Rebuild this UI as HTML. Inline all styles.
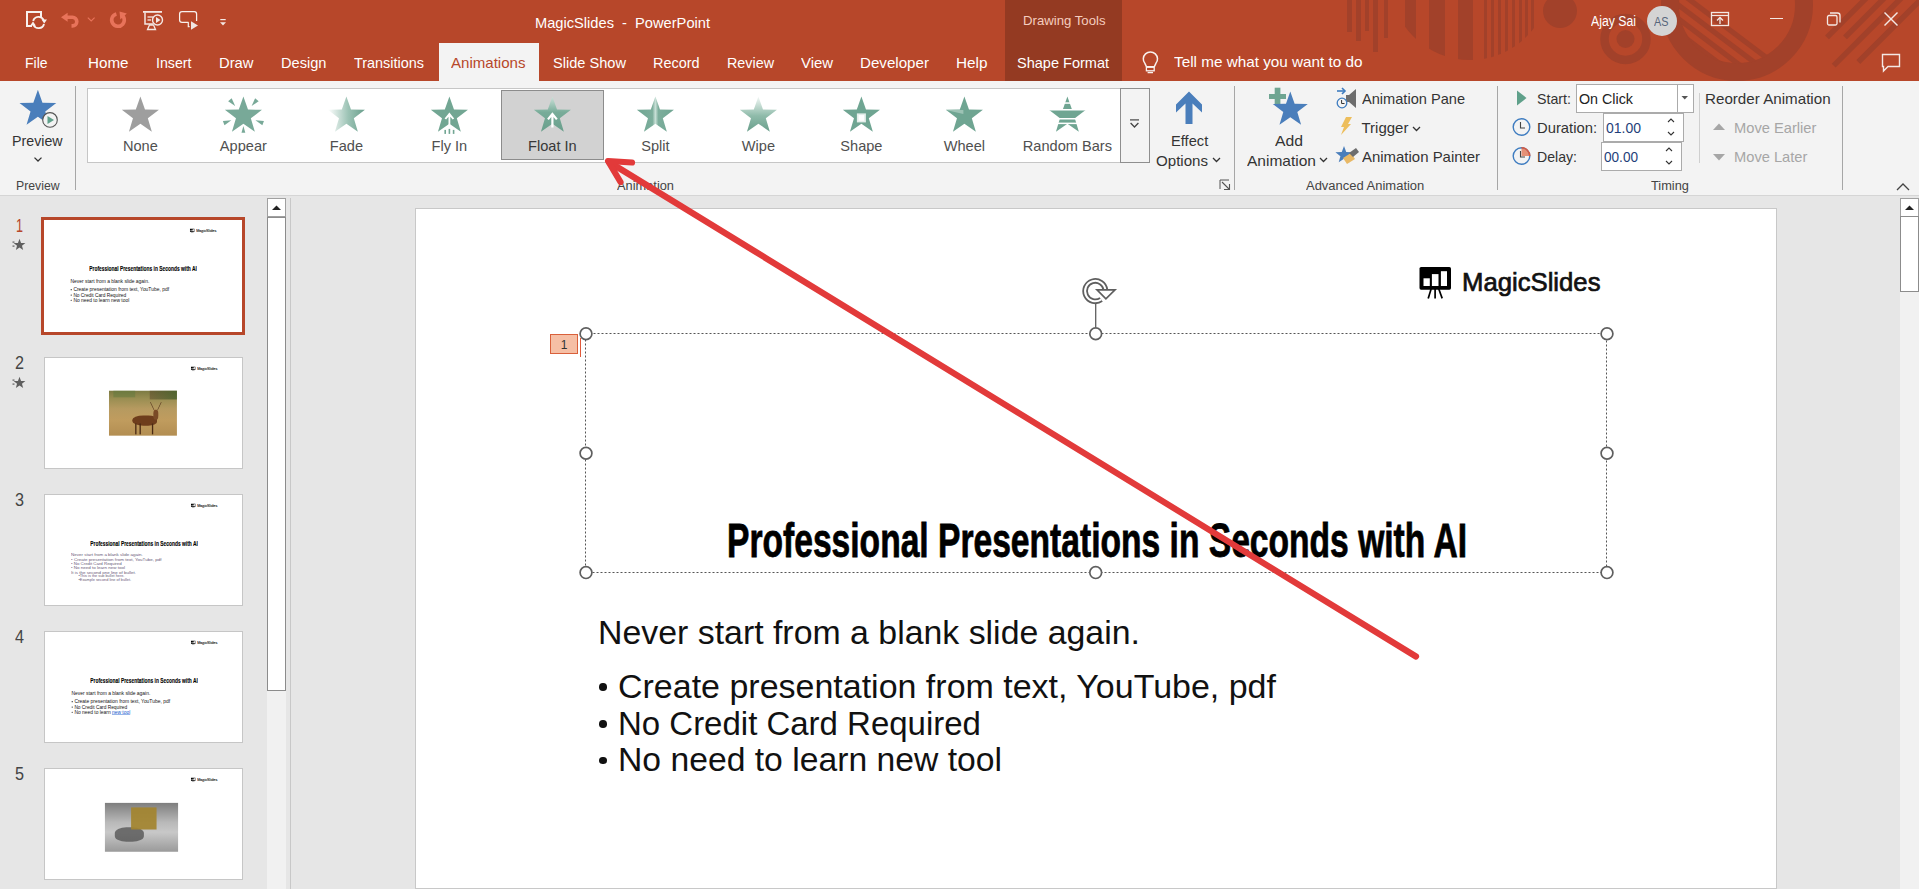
<!DOCTYPE html><html><head><meta charset="utf-8"><style>
html,body{margin:0;padding:0;}
body{width:1919px;height:889px;overflow:hidden;position:relative;background:#E6E6E6;font-family:"Liberation Sans",sans-serif;}
.t{position:absolute;line-height:1;white-space:nowrap;transform-origin:0 0;}
.r{position:absolute;}
</style></head><body>

<div class="r" style="left:0px;top:0px;width:1919px;height:81px;background:#B7472A;"></div>
<svg class="r" style="left:0px;top:0px;" width="1919" height="81" viewBox="0 0 1919 81"><rect x="1347" y="0" width="5" height="32" fill="#A2412A"/><rect x="1356" y="0" width="5" height="41" fill="#A2412A"/><rect x="1365" y="0" width="4" height="31" fill="#A2412A"/><rect x="1373" y="0" width="5" height="52" fill="#A2412A"/><rect x="1384" y="0" width="4" height="38" fill="#A2412A"/><clipPath id="hc"><circle cx="1470" cy="-20" r="80"/></clipPath><g clip-path="url(#hc)"><rect x="1405" y="-100" width="11" height="200" fill="#A2412A"/><rect x="1429" y="-100" width="16" height="200" fill="#A2412A"/><rect x="1458" y="-100" width="15" height="200" fill="#A2412A"/><rect x="1484" y="-100" width="3" height="200" fill="#A2412A"/><rect x="1491" y="-100" width="3" height="200" fill="#A2412A"/><rect x="1498" y="-100" width="3" height="200" fill="#A2412A"/><rect x="1505" y="-100" width="3" height="200" fill="#A2412A"/><rect x="1512" y="-100" width="3" height="200" fill="#A2412A"/><rect x="1519" y="-100" width="3" height="200" fill="#A2412A"/><rect x="1525" y="-100" width="3" height="200" fill="#A2412A"/><rect x="1531" y="-100" width="3" height="200" fill="#A2412A"/></g><circle cx="1560" cy="11" r="17" fill="#A2412A"/><circle cx="1625.5" cy="39" r="21" fill="none" stroke="#A2412A" stroke-width="8.5"/><circle cx="1625.5" cy="39" r="9" fill="#A2412A"/><circle cx="1737" cy="5" r="67" fill="none" stroke="#A2412A" stroke-width="18"/><clipPath id="rc"><circle cx="1737" cy="5" r="59"/></clipPath><g clip-path="url(#rc)"><line x1="-1783.9" y1="-2617.7" x2="3008.0" y2="993.2" stroke="#A2412A" stroke-width="5.2"/><line x1="-1790.5" y1="-2608.9" x2="3001.3" y2="1002.0" stroke="#A2412A" stroke-width="5.2"/><line x1="-1797.1" y1="-2600.1" x2="2994.7" y2="1010.8" stroke="#A2412A" stroke-width="5.2"/><line x1="-1803.7" y1="-2591.3" x2="2988.1" y2="1019.6" stroke="#A2412A" stroke-width="5.2"/></g><line x1="1827" y1="37.4" x2="1927" y2="-62.6" stroke="#A2412A" stroke-width="5.5"/><line x1="1845" y1="37.4" x2="1945" y2="-62.6" stroke="#A2412A" stroke-width="5.5"/><line x1="1833.7" y1="65.6" x2="1933.7" y2="-34.400000000000006" stroke="#A2412A" stroke-width="5.5"/><line x1="1858.3" y1="62" x2="1958.3" y2="-38" stroke="#A2412A" stroke-width="5.5"/></svg>
<div class="r" style="left:1005px;top:0px;width:117px;height:81px;background:#943A22;"></div>
<div class="t" style="left:1023.00px;top:14.00px;font-size:13px;color:#F5CDBF;transform:scaleX(1.0134);">Drawing Tools</div>
<div class="t" style="left:535.00px;top:15.00px;font-size:15px;color:#FFFFFF;transform:scaleX(0.9763);">MagicSlides&nbsp;&nbsp;-&nbsp;&nbsp;PowerPoint</div>
<div class="t" style="left:1591.00px;top:14.00px;font-size:14px;color:#FFFFFF;transform:scaleX(0.8762);">Ajay Sai</div>
<div class="r" style="left:1647px;top:6px;width:30px;height:30px;border-radius:50%;background:#D4D4D4;"></div>
<div class="t" style="left:1654.25px;top:16.00px;font-size:12.5px;color:#56657A;transform:scaleX(0.8695);">AS</div>
<svg class="r" style="left:24px;top:9px;" width="24" height="24" viewBox="0 0 24 24"><path d="M8,17 L3,17 L3,3 L17,3 L17,8" fill="none" stroke="#F8F1EE" stroke-width="2"/><path d="M9.19,12.05 A5.6,5.6 0 0 1 19.68,11.13" fill="none" stroke="#F8F1EE" stroke-width="1.9"/><polygon points="17.5,10.6 23,10.6 20.2,14.4" fill="#F8F1EE"/><path d="M20.01,14.95 A5.6,5.6 0 0 1 9.52,15.87" fill="none" stroke="#F8F1EE" stroke-width="1.9"/><polygon points="6.2,16.4 11.8,16.4 9,12.6" fill="#F8F1EE"/></svg>
<svg class="r" style="left:58px;top:9px;" width="42" height="24" viewBox="0 0 42 24"><polygon points="3,8.3 9.6,3.8 9.6,12.8" fill="#E8735A"/><path d="M9,8.3 L14.5,8.3 A4.3,4.3 0 0 1 14.5,16.9 L13.5,16.9" fill="none" stroke="#E8735A" stroke-width="3.6"/><polyline points="29.8,8.6 33.2,12 36.6,8.6" fill="none" stroke="#E8735A" stroke-width="1.1"/></svg>
<svg class="r" style="left:106px;top:9px;" width="24" height="24" viewBox="0 0 24 24"><path d="M14.66,5.29 A6.3,6.3 0 1 1 10.37,4.91" fill="none" stroke="#E8735A" stroke-width="3.6"/><polygon points="13.5,2.5 20.8,4.4 14.3,10.6" fill="#E8735A"/></svg>
<svg class="r" style="left:140px;top:9px;" width="26" height="24" viewBox="0 0 26 24"><rect x="3" y="2" width="19" height="1.8" fill="#F4E8E4"/><path d="M5,3.5 L5,15 L13,15" fill="none" stroke="#F4E8E4" stroke-width="1.5"/><line x1="7.5" y1="8" x2="13" y2="8" stroke="#F4E8E4" stroke-width="1.3"/><line x1="7.5" y1="11" x2="11" y2="11" stroke="#F4E8E4" stroke-width="1.3"/><circle cx="17.5" cy="11" r="5" fill="none" stroke="#F4E8E4" stroke-width="1.4"/><polygon points="16,8 16,14 20.5,11" fill="#F4E8E4"/><polygon points="9.5,16 13.5,16 15.5,20.5 7.5,20.5" fill="none" stroke="#F4E8E4" stroke-width="1.3"/></svg>
<svg class="r" style="left:176px;top:9px;" width="26" height="24" viewBox="0 0 26 24"><path d="M12.5,13.3 L6,13.3 Q3.6,13.3 3.6,11 L3.6,5 Q3.6,2.6 6,2.6 L18.3,2.6 Q20.6,2.6 20.6,5 L20.6,12" fill="none" stroke="#F8F1EE" stroke-width="1.25"/><polyline points="12.3,13.3 12.3,17.6 13.6,17.6" fill="none" stroke="#F8F1EE" stroke-width="1.2"/><polygon points="15,12.3 22,16.4 15,20.7" fill="#F0E6E2"/></svg>
<svg class="r" style="left:219px;top:16px;" width="10" height="12" viewBox="0 0 10 12"><rect x="1.3" y="3" width="5.4" height="1.2" fill="#F4E8E4"/><polygon points="1,6.2 7,6.2 4,9.4" fill="#F4E8E4"/></svg>
<svg class="r" style="left:1706px;top:9px;" width="28" height="22" viewBox="0 0 28 22"><rect x="5.5" y="3.5" width="17" height="13" fill="none" stroke="#F4E8E4" stroke-width="1.3"/><line x1="5.5" y1="6.5" x2="22.5" y2="6.5" stroke="#F4E8E4" stroke-width="1.2"/><line x1="14" y1="8.5" x2="14" y2="15" stroke="#F4E8E4" stroke-width="1.3"/><polyline points="11,11.5 14,8.5 17,11.5" fill="none" stroke="#F4E8E4" stroke-width="1.3"/></svg>
<div class="r" style="left:1770px;top:17.5px;width:13px;height:1.3px;background:#F4E8E4;"></div>
<svg class="r" style="left:1822px;top:8px;" width="22" height="22" viewBox="0 0 22 22"><rect x="5.5" y="7.5" width="9.5" height="9.5" rx="1.5" fill="none" stroke="#F4E8E4" stroke-width="1.3"/><path d="M8,5 L15.5,5 Q18,5 18,7.5 L18,14.5" fill="none" stroke="#F4E8E4" stroke-width="1.3"/></svg>
<svg class="r" style="left:1880px;top:8px;" width="22" height="22" viewBox="0 0 22 22"><line x1="4.5" y1="4.5" x2="17.5" y2="17.5" stroke="#F4E8E4" stroke-width="1.4"/><line x1="17.5" y1="4.5" x2="4.5" y2="17.5" stroke="#F4E8E4" stroke-width="1.4"/></svg>
<svg class="r" style="left:1878px;top:50px;" width="26" height="24" viewBox="0 0 26 24"><path d="M4.5,4.5 L21.5,4.5 L21.5,16.5 L10,16.5 L5.5,21 L5.5,16.5 L4.5,16.5 Z" fill="none" stroke="#F4E8E4" stroke-width="1.4" stroke-linejoin="miter"/></svg>
<svg class="r" style="left:1138px;top:49.3px;" width="26" height="28" viewBox="0 0 26 28"><path d="M8.5,17.8 L7,14.6 A7.1,7.1 0 1 1 17.8,14.6 L16.3,17.8 Z" fill="none" stroke="#F8F1EE" stroke-width="1.5" stroke-linejoin="round"/><rect x="8.4" y="18.2" width="7.8" height="3.6" fill="none" stroke="#F8F1EE" stroke-width="1.3"/><line x1="9.6" y1="23.6" x2="15" y2="23.6" stroke="#F8F1EE" stroke-width="1.3"/></svg>
<div class="r" style="left:439px;top:43px;width:100px;height:38px;background:#F3F3F3;"></div>
<div class="t" style="left:25.00px;top:55.00px;font-size:15px;color:#FFFFFF;transform:scaleX(0.9309);">File</div>
<div class="t" style="left:88.00px;top:55.00px;font-size:15px;color:#FFFFFF;transform:scaleX(1.0122);">Home</div>
<div class="t" style="left:156.00px;top:55.00px;font-size:15px;color:#FFFFFF;transform:scaleX(0.9463);">Insert</div>
<div class="t" style="left:219.00px;top:55.00px;font-size:15px;color:#FFFFFF;transform:scaleX(0.9856);">Draw</div>
<div class="t" style="left:281.00px;top:55.00px;font-size:15px;color:#FFFFFF;transform:scaleX(0.9744);">Design</div>
<div class="t" style="left:354.00px;top:55.00px;font-size:15px;color:#FFFFFF;transform:scaleX(0.9615);">Transitions</div>
<div class="t" style="left:451.00px;top:55.00px;font-size:15px;color:#B7472A;transform:scaleX(1.0040);">Animations</div>
<div class="t" style="left:553.00px;top:55.00px;font-size:15px;color:#FFFFFF;transform:scaleX(0.9727);">Slide Show</div>
<div class="t" style="left:653.00px;top:55.00px;font-size:15px;color:#FFFFFF;transform:scaleX(0.9616);">Record</div>
<div class="t" style="left:727.00px;top:55.00px;font-size:15px;color:#FFFFFF;transform:scaleX(0.9556);">Review</div>
<div class="t" style="left:801.00px;top:55.00px;font-size:15px;color:#FFFFFF;transform:scaleX(0.9925);">View</div>
<div class="t" style="left:860.00px;top:55.00px;font-size:15px;color:#FFFFFF;transform:scaleX(1.0092);">Developer</div>
<div class="t" style="left:956.40px;top:55.00px;font-size:15px;color:#FFFFFF;transform:scaleX(1.0210);">Help</div>
<div class="t" style="left:1017.00px;top:55.00px;font-size:15px;color:#FFFFFF;transform:scaleX(0.9679);">Shape Format</div>
<div class="t" style="left:1174.00px;top:54.00px;font-size:15px;color:#FFFFFF;transform:scaleX(1.0184);">Tell me what you want to do</div>
<div class="r" style="left:0px;top:81px;width:1919px;height:114px;background:#F3F3F3;"></div>
<div class="r" style="left:0px;top:195px;width:1919px;height:1px;background:#D5D5D5;"></div>
<svg class="r" style="left:0px;top:82px;" width="80" height="50" viewBox="0 0 80 50"><polygon points="37.90,7.65 42.45,20.74 56.30,21.02 45.26,29.39 49.27,42.65 37.90,34.74 26.53,42.65 30.54,29.39 19.50,21.02 33.35,20.74" fill="#4A7EBB"/><circle cx="50" cy="37.9" r="7.3" fill="#F3F3F3" stroke="#555" stroke-width="1.1"/><polygon points="47.5,34 47.5,42 54,38" fill="#5FA08A"/></svg>
<div class="t" style="left:12.30px;top:133.00px;font-size:15px;color:#333;transform:scaleX(0.9484);">Preview</div>
<svg class="r" style="left:31.5px;top:154px;" width="12" height="10" viewBox="0 0 12 10"><polyline points="2.5,3.6 6,7 9.5,3.6" fill="none" stroke="#333" stroke-width="1.3"/></svg>
<div class="t" style="left:15.50px;top:180.00px;font-size:12.5px;color:#444444;transform:scaleX(0.9807);">Preview</div>
<div class="r" style="left:75px;top:86px;width:1px;height:104px;background:#A6A6A6;"></div>
<div class="r" style="left:87px;top:88px;width:1034px;height:75px;background:#FFFFFF;box-sizing:border-box;border:1px solid #C6C6C6;"></div>
<div class="r" style="left:501px;top:90px;width:103px;height:70px;background:#D2D2D2;box-sizing:border-box;border:1px solid #8C8C8C;"></div>
<div class="r" style="left:1120px;top:88px;width:30px;height:75px;background:#F3F3F3;box-sizing:border-box;border:1px solid #8E8E8E;"></div>
<svg class="r" style="left:1127px;top:116px;" width="16" height="16" viewBox="0 0 16 16"><line x1="3" y1="3.9" x2="12" y2="3.9" stroke="#444" stroke-width="1.2"/><polyline points="3.6,7 7.5,11 11.4,7" fill="none" stroke="#444" stroke-width="1.3"/></svg>
<svg class="r" style="left:87px;top:88px;" width="1034" height="75" viewBox="0 0 1034 75"><defs>
<linearGradient id="gfade" x1="0" y1="0" x2="1" y2="0"><stop offset="0" stop-color="#FFFFFF"/><stop offset="0.55" stop-color="#9CC3B5"/><stop offset="1" stop-color="#6A9F8C"/></linearGradient>
<linearGradient id="gtop" x1="0" y1="0" x2="0" y2="1"><stop offset="0" stop-color="#F4F9F7"/><stop offset="0.55" stop-color="#8FBBAA"/><stop offset="1" stop-color="#6A9F8C"/></linearGradient>
<linearGradient id="gsplit" x1="0" y1="0" x2="1" y2="0"><stop offset="0" stop-color="#6FA592"/><stop offset="0.42" stop-color="#7DAE9C"/><stop offset="0.5" stop-color="#C9E0D7"/><stop offset="0.58" stop-color="#7DAE9C"/><stop offset="1" stop-color="#6FA592"/></linearGradient>
<linearGradient id="gfl" x1="0" y1="0" x2="0" y2="1"><stop offset="0" stop-color="#CFE3DB"/><stop offset="0.45" stop-color="#78AC99"/><stop offset="1" stop-color="#6A9F8C"/></linearGradient>
</defs><polygon points="53.40,8.40 57.98,21.59 71.95,21.87 60.82,30.31 64.86,43.68 53.40,35.70 41.94,43.68 45.98,30.31 34.85,21.87 48.82,21.59" fill="#9E9E9E"/><polygon points="156.40,8.40 160.98,21.59 174.95,21.87 163.82,30.31 167.86,43.68 156.40,35.70 144.94,43.68 148.98,30.31 137.85,21.87 151.82,21.59" fill="#78A998"/><polygon points="148.17,18.09 144.66,10.33 141.14,13.29" fill="#78A998"/><polygon points="164.63,18.09 171.66,13.29 168.14,10.33" fill="#78A998"/><polygon points="144.37,32.28 135.88,32.92 137.45,37.24" fill="#78A998"/><polygon points="168.43,32.28 175.35,37.24 176.92,32.92" fill="#78A998"/><polygon points="156.40,38.10 154.50,44.70 158.30,44.70" fill="#78A998"/><polygon points="259.40,8.40 263.98,21.59 277.95,21.87 266.82,30.31 270.86,43.68 259.40,35.70 247.94,43.68 251.98,30.31 240.85,21.87 254.82,21.59" fill="url(#gfade)"/><polygon points="362.40,8.40 366.98,21.59 380.95,21.87 369.82,30.31 373.86,43.68 362.40,35.70 350.94,43.68 354.98,30.31 343.85,21.87 357.82,21.59" fill="#72A693"/><polygon points="357.59999999999997,30.400000000000006 362.4,24.500000000000007 367.2,30.400000000000006 365.7,31.500000000000007 363.29999999999995,28.800000000000004 363.29999999999995,40.900000000000006 361.5,40.900000000000006 361.5,28.800000000000004 359.09999999999997,31.500000000000007" fill="#fff"/><rect x="357.4" y="41.900000000000006" width="1.6" height="4" fill="#72A693"/><rect x="361.59999999999997" y="40.900000000000006" width="1.6" height="5" fill="#72A693"/><rect x="365.79999999999995" y="41.900000000000006" width="1.6" height="4" fill="#72A693"/><polygon points="465.40,8.40 469.98,21.59 483.95,21.87 472.82,30.31 476.86,43.68 465.40,35.70 453.94,43.68 457.98,30.31 446.85,21.87 460.82,21.59" fill="url(#gfl)"/><polygon points="460.09999999999997,30.700000000000006 465.4,24.300000000000004 470.7,30.700000000000006 469.0,31.900000000000006 466.5,28.900000000000006 466.5,39.400000000000006 464.29999999999995,39.400000000000006 464.29999999999995,28.900000000000006 461.79999999999995,31.900000000000006" fill="#fff"/><polygon points="568.40,8.40 572.98,21.59 586.95,21.87 575.82,30.31 579.86,43.68 568.40,35.70 556.94,43.68 560.98,30.31 549.85,21.87 563.82,21.59" fill="url(#gsplit)"/><polygon points="671.40,8.40 675.98,21.59 689.95,21.87 678.82,30.31 682.86,43.68 671.40,35.70 659.94,43.68 663.98,30.31 652.85,21.87 666.82,21.59" fill="url(#gtop)"/><polygon points="774.40,8.40 778.98,21.59 792.95,21.87 781.82,30.31 785.86,43.68 774.40,35.70 762.94,43.68 766.98,30.31 755.85,21.87 769.82,21.59" fill="#6FA592"/><rect x="769.9" y="25.400000000000006" width="9" height="9" fill="#E5EFEB"/><rect x="771.6" y="27.100000000000005" width="5.6" height="5.6" fill="#FFFFFF"/><polygon points="877.40,8.40 881.98,21.59 895.95,21.87 884.82,30.31 888.86,43.68 877.40,35.70 865.94,43.68 869.98,30.31 858.85,21.87 872.82,21.59" fill="#6FA592"/><polygon points="858.9,21.900000000000006 876.4,21.900000000000006 876.4,25.900000000000006" fill="#A9CBBE" opacity="0.8"/><polygon points="980.40,8.40 984.98,21.59 998.95,21.87 987.82,30.31 991.86,43.68 980.40,35.70 968.94,43.68 972.98,30.31 961.85,21.87 975.82,21.59" fill="#6FA592"/><rect x="958.4000000000001" y="14.300000000000006" width="44" height="1.5" fill="#FFFFFF"/><rect x="958.4000000000001" y="21.000000000000007" width="44" height="1.5" fill="#FFFFFF"/><rect x="958.4000000000001" y="30.000000000000007" width="44" height="1.5" fill="#FFFFFF"/><rect x="958.4000000000001" y="34.60000000000001" width="44" height="1.5" fill="#FFFFFF"/></svg>
<div class="t" style="left:122.95px;top:139.00px;font-size:14.6px;color:#505050;">None</div>
<div class="t" style="left:219.86px;top:139.00px;font-size:14.6px;color:#505050;">Appear</div>
<div class="t" style="left:329.76px;top:139.00px;font-size:14.6px;color:#505050;">Fade</div>
<div class="t" style="left:431.55px;top:139.00px;font-size:14.6px;color:#505050;">Fly In</div>
<div class="t" style="left:528.05px;top:139.00px;font-size:14.6px;color:#383838;">Float In</div>
<div class="t" style="left:641.20px;top:139.00px;font-size:14.6px;color:#505050;">Split</div>
<div class="t" style="left:741.77px;top:139.00px;font-size:14.6px;color:#505050;">Wipe</div>
<div class="t" style="left:840.29px;top:139.00px;font-size:14.6px;color:#505050;">Shape</div>
<div class="t" style="left:943.71px;top:139.00px;font-size:14.6px;color:#505050;">Wheel</div>
<div class="t" style="left:1022.77px;top:139.00px;font-size:14.6px;color:#505050;">Random Bars</div>
<div class="t" style="left:616.50px;top:180.00px;font-size:12.5px;color:#444444;transform:scaleX(1.0254);">Animation</div>
<svg class="r" style="left:1170px;top:88px;" width="40" height="40" viewBox="0 0 40 40"><polygon points="19,3.5 32,16.5 32,24.5 22.5,15.5 22.5,36 15.5,36 15.5,15.5 6,24.5 6,16.5" fill="#4A7EBB"/></svg>
<div class="t" style="left:1170.80px;top:133.00px;font-size:15px;color:#333;transform:scaleX(0.9769);">Effect</div>
<div class="t" style="left:1156.00px;top:153.00px;font-size:15px;color:#333;transform:scaleX(1.0059);">Options</div>
<svg class="r" style="left:1211px;top:156px;" width="12" height="8" viewBox="0 0 12 8"><polyline points="2,2 5.5,5.5 9,2" fill="none" stroke="#333" stroke-width="1.3"/></svg>
<svg class="r" style="left:1218px;top:178px;" width="14" height="14" viewBox="0 0 14 14"><polyline points="2,11 2,2 11,2" fill="none" stroke="#555" stroke-width="1"/><line x1="4" y1="4" x2="11" y2="11" stroke="#555" stroke-width="1.1"/><polyline points="6,11.5 11.5,11.5 11.5,6" fill="none" stroke="#555" stroke-width="1.1"/></svg>
<div class="r" style="left:1234px;top:86px;width:1px;height:104px;background:#A6A6A6;"></div>
<svg class="r" style="left:1265px;top:86px;" width="50" height="42" viewBox="0 0 50 42"><rect x="4" y="8" width="17" height="5" fill="#6FA592"/><rect x="9.7" y="1.7" width="5.7" height="17.2" fill="#6FA592"/><polygon points="25.30,5.40 29.63,17.85 42.80,18.11 32.30,26.07 36.12,38.69 25.30,31.16 14.48,38.69 18.30,26.07 7.80,18.11 20.97,17.85" fill="#4A7EBB"/></svg>
<div class="t" style="left:1275.00px;top:133.00px;font-size:15px;color:#333;transform:scaleX(1.0491);">Add</div>
<div class="t" style="left:1247.00px;top:153.00px;font-size:15px;color:#333;transform:scaleX(1.0344);">Animation</div>
<svg class="r" style="left:1318px;top:156px;" width="12" height="8" viewBox="0 0 12 8"><polyline points="2,2 5.5,5.5 9,2" fill="none" stroke="#333" stroke-width="1.3"/></svg>
<svg class="r" style="left:1335px;top:86px;" width="24" height="24" viewBox="0 0 24 24"><polygon points="11,9 14,9 21,3 21,22 14,16 11,16" fill="#6D6D6D"/><line x1="2" y1="5" x2="10" y2="5" stroke="#3E7CC0" stroke-width="1.6"/><polyline points="7,2 10,5 7,8" fill="none" stroke="#3E7CC0" stroke-width="1.6"/><circle cx="7" cy="17" r="4.8" fill="#F3F3F3" stroke="#3E7CC0" stroke-width="1.3"/><polyline points="6.6,14 6.6,17.5 9.5,17.5" fill="none" stroke="#333" stroke-width="1"/></svg>
<div class="t" style="left:1361.50px;top:91.00px;font-size:15px;color:#333;transform:scaleX(0.9726);">Animation Pane</div>
<svg class="r" style="left:1338px;top:116px;" width="18" height="22" viewBox="0 0 18 22"><polygon points="8,1 14,1 10,8 13,8 3,19 6,11 3,11" fill="#EDBE5C"/></svg>
<div class="t" style="left:1361.50px;top:120.00px;font-size:15px;color:#333;">Trigger</div>
<svg class="r" style="left:1411px;top:125px;" width="12" height="8" viewBox="0 0 12 8"><polyline points="2,2 5.5,5.5 9,2" fill="none" stroke="#333" stroke-width="1.3"/></svg>
<svg class="r" style="left:1335px;top:145px;" width="26" height="22" viewBox="0 0 26 22"><polygon points="9.00,1.00 11.22,6.94 17.56,7.22 12.59,11.17 14.29,17.28 9.00,13.78 3.71,17.28 5.41,11.17 0.44,7.22 6.78,6.94" fill="#4A7EBB"/><polygon points="8,13 16,8 20,14 12,19" fill="#E8B865"/><polygon points="14,8 21,3 24,7 18,12" fill="#6D6D6D"/></svg>
<div class="t" style="left:1361.50px;top:149.00px;font-size:15px;color:#333;transform:scaleX(0.9966);">Animation Painter</div>
<div class="t" style="left:1306.35px;top:180.00px;font-size:12.5px;color:#444444;transform:scaleX(1.0380);">Advanced Animation</div>
<div class="r" style="left:1497px;top:86px;width:1px;height:104px;background:#A6A6A6;"></div>
<svg class="r" style="left:1514px;top:88px;" width="16" height="20" viewBox="0 0 16 20"><polygon points="3,2.5 12.5,10 3,17.5" fill="#5FA08A"/></svg>
<div class="t" style="left:1536.60px;top:91.00px;font-size:15px;color:#333;transform:scaleX(0.9485);">Start:</div>
<div class="r" style="left:1576px;top:84px;width:118px;height:29px;background:#FFFFFF;box-sizing:border-box;border:1px solid #ABABAB;"></div>
<div class="r" style="left:1677px;top:85px;width:1px;height:27px;background:#ABABAB;"></div>
<svg class="r" style="left:1680px;top:94px;" width="10" height="8" viewBox="0 0 10 8"><polygon points="1.5,2 8,2 4.75,5.5" fill="#555"/></svg>
<div class="t" style="left:1579.00px;top:91.00px;font-size:15px;color:#222;transform:scaleX(0.9528);">On Click</div>
<svg class="r" style="left:1511px;top:116px;" width="22" height="22" viewBox="0 0 22 22"><circle cx="10.5" cy="11" r="8.3" fill="none" stroke="#3E7CC0" stroke-width="1.4"/><polyline points="9.5,6 9.5,12 14,12" fill="none" stroke="#444" stroke-width="1.1"/></svg>
<div class="t" style="left:1537.00px;top:120.00px;font-size:15px;color:#333;transform:scaleX(0.9858);">Duration:</div>
<div class="r" style="left:1603px;top:113px;width:81px;height:29px;background:#FFFFFF;box-sizing:border-box;border:1px solid #ABABAB;"></div>
<div class="t" style="left:1606.00px;top:120.00px;font-size:15px;color:#1F3F7A;transform:scaleX(0.9324);">01.00</div>
<svg class="r" style="left:1664px;top:116px;" width="14" height="22" viewBox="0 0 14 22"><polyline points="4,6 7,3 10,6" fill="none" stroke="#333" stroke-width="1.1"/><polyline points="4,16 7,19 10,16" fill="none" stroke="#333" stroke-width="1.1"/></svg>
<svg class="r" style="left:1511px;top:145px;" width="22" height="22" viewBox="0 0 22 22"><path d="M10.5,11 L10.5,2.7 A8.3,8.3 0 0 1 18.8,11 Z" fill="#E59076"/><circle cx="10.5" cy="11" r="8.3" fill="none" stroke="#3E7CC0" stroke-width="1.4"/><path d="M10.5,2.7 A8.3,8.3 0 0 1 18.8,11" fill="none" stroke="#E0583A" stroke-width="1.4"/><polyline points="9.5,6 9.5,12 14,12" fill="none" stroke="#444" stroke-width="1.1"/></svg>
<div class="t" style="left:1537.00px;top:149.00px;font-size:15px;color:#333;transform:scaleX(0.9408);">Delay:</div>
<div class="r" style="left:1601px;top:142px;width:81px;height:29px;background:#FFFFFF;box-sizing:border-box;border:1px solid #ABABAB;"></div>
<div class="t" style="left:1604.00px;top:149.00px;font-size:15px;color:#1F3F7A;transform:scaleX(0.9058);">00.00</div>
<svg class="r" style="left:1662px;top:145px;" width="14" height="22" viewBox="0 0 14 22"><polyline points="4,6 7,3 10,6" fill="none" stroke="#333" stroke-width="1.1"/><polyline points="4,16 7,19 10,16" fill="none" stroke="#333" stroke-width="1.1"/></svg>
<div class="t" style="left:1650.55px;top:180.00px;font-size:12.5px;color:#444444;transform:scaleX(1.0231);">Timing</div>
<div class="r" style="left:1699px;top:93px;width:1px;height:70px;background:#CFCFCF;"></div>
<div class="t" style="left:1705.20px;top:91.00px;font-size:15px;color:#333;transform:scaleX(1.0110);">Reorder Animation</div>
<svg class="r" style="left:1711px;top:122px;" width="16" height="10" viewBox="0 0 16 10"><polygon points="2,8 8,1.5 14,8" fill="#A6A6A6"/></svg>
<div class="t" style="left:1733.60px;top:120.00px;font-size:15px;color:#A6A6A6;transform:scaleX(0.9787);">Move Earlier</div>
<svg class="r" style="left:1711px;top:152px;" width="16" height="10" viewBox="0 0 16 10"><polygon points="2,2 14,2 8,8.5" fill="#A6A6A6"/></svg>
<div class="t" style="left:1733.60px;top:149.00px;font-size:15px;color:#A6A6A6;transform:scaleX(0.9782);">Move Later</div>
<div class="r" style="left:1842px;top:86px;width:1px;height:104px;background:#A6A6A6;"></div>
<svg class="r" style="left:1895px;top:181px;" width="16" height="12" viewBox="0 0 16 12"><polyline points="2,9 8,3 14,9" fill="none" stroke="#444" stroke-width="1.3"/></svg>
<div class="r" style="left:290px;top:198px;width:1px;height:691px;background:#C8C8C8;"></div>
<div class="r" style="left:267px;top:198px;width:19px;height:691px;background:#F1F1F1;"></div>
<div class="r" style="left:267px;top:198px;width:19px;height:19px;background:#FFFFFF;box-sizing:border-box;border:1px solid #A0A0A0;"></div>
<svg class="r" style="left:267px;top:198px;" width="19" height="19" viewBox="0 0 19 19"><polygon points="5,12 14,12 9.5,7.5" fill="#222"/></svg>
<div class="r" style="left:267px;top:217px;width:19px;height:474px;background:#FFFFFF;box-sizing:border-box;border:1.5px solid #8C8C8C;"></div>
<div class="r" style="left:1900px;top:198px;width:19px;height:691px;background:#F1F1F1;"></div>
<div class="r" style="left:1900px;top:198px;width:19px;height:19px;background:#FFFFFF;box-sizing:border-box;border:1px solid #A0A0A0;"></div>
<svg class="r" style="left:1900px;top:198px;" width="19" height="19" viewBox="0 0 19 19"><polygon points="5,12 14,12 9.5,7.5" fill="#222"/></svg>
<div class="r" style="left:1900px;top:216px;width:19px;height:76px;background:#FFFFFF;box-sizing:border-box;border:1.5px solid #8C8C8C;"></div>
<div class="r" style="left:415px;top:208px;width:1362px;height:681px;background:#FFFFFF;box-sizing:border-box;border:1px solid #C8C8C8;"></div>
<div class="r" style="left:416px;top:209px;width:1360px;height:680px;overflow:hidden">
<div class="r" style="left:0;top:-1px;width:1360px;height:766px">
<svg class="r" style="left:1002px;top:58px" width="34" height="34" viewBox="0 0 34 34"><rect x="1.5" y="1" width="31.5" height="22.7" rx="1.6" fill="#000"/><rect x="5.5" y="12.3" width="6.3" height="7.7" fill="#fff"/><rect x="13.9" y="8.1" width="6.6" height="11.9" fill="#fff"/><rect x="22.9" y="5.2" width="6.1" height="14.8" fill="#fff"/><line x1="13.1" y1="23" x2="10.2" y2="32.4" stroke="#000" stroke-width="1.7"/><line x1="17.1" y1="23" x2="17.1" y2="32.4" stroke="#000" stroke-width="1.7"/><line x1="20.8" y1="23" x2="24.2" y2="32.4" stroke="#000" stroke-width="1.7"/></svg>
<div class="t" style="left:1045.50px;top:61.00px;font-size:26px;color:#111111;transform:scaleX(0.9881);-webkit-text-stroke:0.7px #111;">MagicSlides</div>
<div class="t" style="left:310.50px;top:309.00px;font-size:47.5px;color:#000000;font-weight:700;transform:scaleX(0.7074);-webkit-text-stroke:0.8px #000;">Professional Presentations in Seconds with AI</div>
<div class="t" style="left:182.20px;top:409.00px;font-size:32.8px;color:#111111;transform:scaleX(1.0323);">Never start from a blank slide again.</div>
<div class="r" style="left:183px;top:475.1px;width:7.6px;height:7.6px;border-radius:50%;background:#111"></div>
<div class="r" style="left:183px;top:512.2px;width:7.6px;height:7.6px;border-radius:50%;background:#111"></div>
<div class="r" style="left:183px;top:548.6px;width:7.6px;height:7.6px;border-radius:50%;background:#111"></div>
<div class="t" style="left:202.00px;top:463.00px;font-size:32.8px;color:#111111;transform:scaleX(1.0360);">Create presentation from text, YouTube, pdf</div>
<div class="t" style="left:202.00px;top:500.00px;font-size:32.8px;color:#111111;transform:scaleX(1.0056);">No Credit Card Required</div>
<div class="t" style="left:202.00px;top:536.00px;font-size:32.8px;color:#111111;transform:scaleX(1.0273);">No need to learn new tool</div>
</div></div>
<div class="r" style="left:41px;top:217px;width:204px;height:118px;background:#B7472A;"></div>
<div class="r" style="left:44.2px;top:220.2px;width:197.8px;height:111.5px;background:#fff;overflow:hidden">
<div class="r" style="left:0;top:0;width:1360px;height:766px;transform:scale(0.14544);transform-origin:0 0">
<svg class="r" style="left:1002px;top:58px" width="34" height="34" viewBox="0 0 34 34"><rect x="1.5" y="1" width="31.5" height="22.7" rx="1.6" fill="#000"/><rect x="5.5" y="12.3" width="6.3" height="7.7" fill="#fff"/><rect x="13.9" y="8.1" width="6.6" height="11.9" fill="#fff"/><rect x="22.9" y="5.2" width="6.1" height="14.8" fill="#fff"/><line x1="13.1" y1="23" x2="10.2" y2="32.4" stroke="#000" stroke-width="1.7"/><line x1="17.1" y1="23" x2="17.1" y2="32.4" stroke="#000" stroke-width="1.7"/><line x1="20.8" y1="23" x2="24.2" y2="32.4" stroke="#000" stroke-width="1.7"/></svg>
<div class="t" style="left:1045.50px;top:61.00px;font-size:26px;color:#111111;transform:scaleX(0.9881);-webkit-text-stroke:0.7px #111;">MagicSlides</div>
<div class="t" style="left:310.50px;top:309.00px;font-size:47.5px;color:#000000;font-weight:700;transform:scaleX(0.7074);-webkit-text-stroke:0.8px #000;">Professional Presentations in Seconds with AI</div>
<div class="t" style="left:182.20px;top:409.00px;font-size:32.8px;color:#111111;transform:scaleX(1.0323);">Never start from a blank slide again.</div>
<div class="r" style="left:183px;top:475.1px;width:7.6px;height:7.6px;border-radius:50%;background:#111"></div>
<div class="r" style="left:183px;top:512.2px;width:7.6px;height:7.6px;border-radius:50%;background:#111"></div>
<div class="r" style="left:183px;top:548.6px;width:7.6px;height:7.6px;border-radius:50%;background:#111"></div>
<div class="t" style="left:202.00px;top:463.00px;font-size:32.8px;color:#111111;transform:scaleX(1.0360);">Create presentation from text, YouTube, pdf</div>
<div class="t" style="left:202.00px;top:500.00px;font-size:32.8px;color:#111111;transform:scaleX(1.0056);">No Credit Card Required</div>
<div class="t" style="left:202.00px;top:536.00px;font-size:32.8px;color:#111111;transform:scaleX(1.0273);">No need to learn new tool</div>
</div></div>
<div class="r" style="left:44px;top:357px;width:198.5px;height:112px;background:#C6C6C6;"></div>
<div class="r" style="left:45px;top:358px;width:196.5px;height:110px;background:#fff;overflow:hidden">
<div class="r" style="left:0;top:0;width:1360px;height:766px;transform:scale(0.14544);transform-origin:0 0">
<svg class="r" style="left:1002px;top:58px" width="34" height="34" viewBox="0 0 34 34"><rect x="1.5" y="1" width="31.5" height="22.7" rx="1.6" fill="#000"/><rect x="5.5" y="12.3" width="6.3" height="7.7" fill="#fff"/><rect x="13.9" y="8.1" width="6.6" height="11.9" fill="#fff"/><rect x="22.9" y="5.2" width="6.1" height="14.8" fill="#fff"/><line x1="13.1" y1="23" x2="10.2" y2="32.4" stroke="#000" stroke-width="1.7"/><line x1="17.1" y1="23" x2="17.1" y2="32.4" stroke="#000" stroke-width="1.7"/><line x1="20.8" y1="23" x2="24.2" y2="32.4" stroke="#000" stroke-width="1.7"/></svg>
<div class="t" style="left:1045.50px;top:61.00px;font-size:26px;color:#111111;transform:scaleX(0.9881);-webkit-text-stroke:0.7px #111;">MagicSlides</div>
<div class="r" style="left:440px;top:225px;width:467px;height:309px;background:linear-gradient(180deg,#7C7A42 0%,#9A8E52 18%,#B69A60 40%,#C09C5E 65%,#B38E52 100%)"></div>
<div class="r" style="left:720px;top:225px;width:187px;height:60px;background:linear-gradient(90deg,rgba(90,70,40,0.5),rgba(60,90,40,0.7))"></div>
<div class="r" style="left:470px;top:225px;width:150px;height:45px;background:rgba(90,120,60,0.45)"></div>
<div class="r" style="left:600px;top:395px;width:170px;height:70px;border-radius:45% 35% 35% 45%;background:#6E3D1C"></div>
<div class="r" style="left:745px;top:355px;width:34px;height:70px;border-radius:40%;background:#7A4A26"></div>
<div class="r" style="left:620px;top:450px;width:9px;height:75px;background:#4A2A14"></div><div class="r" style="left:650px;top:450px;width:9px;height:75px;background:#4A2A14"></div><div class="r" style="left:735px;top:450px;width:9px;height:75px;background:#4A2A14"></div>
<div class="r" style="left:735px;top:300px;width:4px;height:60px;background:#5A3A20;transform:rotate(-25deg)"></div><div class="r" style="left:785px;top:300px;width:4px;height:60px;background:#5A3A20;transform:rotate(25deg)"></div>
</div></div>
<div class="r" style="left:44px;top:494px;width:198.5px;height:112px;background:#C6C6C6;"></div>
<div class="r" style="left:45px;top:495px;width:196.5px;height:110px;background:#fff;overflow:hidden">
<div class="r" style="left:0;top:0;width:1360px;height:766px;transform:scale(0.14544);transform-origin:0 0">
<svg class="r" style="left:1002px;top:58px" width="34" height="34" viewBox="0 0 34 34"><rect x="1.5" y="1" width="31.5" height="22.7" rx="1.6" fill="#000"/><rect x="5.5" y="12.3" width="6.3" height="7.7" fill="#fff"/><rect x="13.9" y="8.1" width="6.6" height="11.9" fill="#fff"/><rect x="22.9" y="5.2" width="6.1" height="14.8" fill="#fff"/><line x1="13.1" y1="23" x2="10.2" y2="32.4" stroke="#000" stroke-width="1.7"/><line x1="17.1" y1="23" x2="17.1" y2="32.4" stroke="#000" stroke-width="1.7"/><line x1="20.8" y1="23" x2="24.2" y2="32.4" stroke="#000" stroke-width="1.7"/></svg>
<div class="t" style="left:1045.50px;top:61.00px;font-size:26px;color:#111111;transform:scaleX(0.9881);-webkit-text-stroke:0.7px #111;">MagicSlides</div>
<div class="t" style="left:310.50px;top:309.00px;font-size:47.5px;color:#000000;font-weight:700;transform:scaleX(0.7074);-webkit-text-stroke:0.8px #000;">Professional Presentations in Seconds with AI</div>
<div class="t" style="left:179.00px;top:397.00px;font-size:24px;color:#6A5A78;transform:scaleX(1.2832);">Never start from a blank slide again.</div>
<div class="t" style="left:179.00px;top:436.00px;font-size:24px;color:#6A5A78;transform:scaleX(1.2963);">•&nbsp;Create presentation from text, YouTube, pdf</div>
<div class="t" style="left:179.00px;top:464.00px;font-size:24px;color:#6A5A78;transform:scaleX(1.2464);">•&nbsp;No Credit Card Required</div>
<div class="t" style="left:179.00px;top:492.00px;font-size:24px;color:#6A5A78;transform:scaleX(1.2856);">•&nbsp;No need to learn new tool</div>
<div class="t" style="left:179.00px;top:520.00px;font-size:24px;color:#6A5A78;transform:scaleX(1.2759);">It is the second one line of bullet.</div>
<div class="t" style="left:230.00px;top:544.00px;font-size:22px;color:#6A5A78;transform:scaleX(1.1947);">•This is the sub bullet here.</div>
<div class="t" style="left:230.00px;top:570.00px;font-size:22px;color:#6A5A78;transform:scaleX(1.2067);">•Example second line of bullet.</div>
</div></div>
<div class="r" style="left:44px;top:631px;width:198.5px;height:112px;background:#C6C6C6;"></div>
<div class="r" style="left:45px;top:632px;width:196.5px;height:110px;background:#fff;overflow:hidden">
<div class="r" style="left:0;top:0;width:1360px;height:766px;transform:scale(0.14544);transform-origin:0 0">
<svg class="r" style="left:1002px;top:58px" width="34" height="34" viewBox="0 0 34 34"><rect x="1.5" y="1" width="31.5" height="22.7" rx="1.6" fill="#000"/><rect x="5.5" y="12.3" width="6.3" height="7.7" fill="#fff"/><rect x="13.9" y="8.1" width="6.6" height="11.9" fill="#fff"/><rect x="22.9" y="5.2" width="6.1" height="14.8" fill="#fff"/><line x1="13.1" y1="23" x2="10.2" y2="32.4" stroke="#000" stroke-width="1.7"/><line x1="17.1" y1="23" x2="17.1" y2="32.4" stroke="#000" stroke-width="1.7"/><line x1="20.8" y1="23" x2="24.2" y2="32.4" stroke="#000" stroke-width="1.7"/></svg>
<div class="t" style="left:1045.50px;top:61.00px;font-size:26px;color:#111111;transform:scaleX(0.9881);-webkit-text-stroke:0.7px #111;">MagicSlides</div>
<div class="t" style="left:310.50px;top:309.00px;font-size:47.5px;color:#000000;font-weight:700;transform:scaleX(0.7074);-webkit-text-stroke:0.8px #000;">Professional Presentations in Seconds with AI</div>
<div class="t" style="left:182.20px;top:409.00px;font-size:32.8px;color:#111111;transform:scaleX(1.0323);">Never start from a blank slide again.</div>
<div class="r" style="left:183px;top:475.1px;width:7.6px;height:7.6px;border-radius:50%;background:#111"></div>
<div class="r" style="left:183px;top:512.2px;width:7.6px;height:7.6px;border-radius:50%;background:#111"></div>
<div class="r" style="left:183px;top:548.6px;width:7.6px;height:7.6px;border-radius:50%;background:#111"></div>
<div class="t" style="left:202.00px;top:463.00px;font-size:32.8px;color:#111111;transform:scaleX(1.0360);">Create presentation from text, YouTube, pdf</div>
<div class="t" style="left:202.00px;top:500.00px;font-size:32.8px;color:#111111;transform:scaleX(1.0056);">No Credit Card Required</div>
<div class="t" style="left:202.00px;top:536.00px;font-size:32.8px;color:#111111;transform:scaleX(1.0273);">No need to learn <span style="color:#1155CC;text-decoration:underline">new tool</span></div>
</div></div>
<div class="r" style="left:44px;top:768px;width:198.5px;height:112px;background:#C6C6C6;"></div>
<div class="r" style="left:45px;top:769px;width:196.5px;height:110px;background:#fff;overflow:hidden">
<div class="r" style="left:0;top:0;width:1360px;height:766px;transform:scale(0.14544);transform-origin:0 0">
<svg class="r" style="left:1002px;top:58px" width="34" height="34" viewBox="0 0 34 34"><rect x="1.5" y="1" width="31.5" height="22.7" rx="1.6" fill="#000"/><rect x="5.5" y="12.3" width="6.3" height="7.7" fill="#fff"/><rect x="13.9" y="8.1" width="6.6" height="11.9" fill="#fff"/><rect x="22.9" y="5.2" width="6.1" height="14.8" fill="#fff"/><line x1="13.1" y1="23" x2="10.2" y2="32.4" stroke="#000" stroke-width="1.7"/><line x1="17.1" y1="23" x2="17.1" y2="32.4" stroke="#000" stroke-width="1.7"/><line x1="20.8" y1="23" x2="24.2" y2="32.4" stroke="#000" stroke-width="1.7"/></svg>
<div class="t" style="left:1045.50px;top:61.00px;font-size:26px;color:#111111;transform:scaleX(0.9881);-webkit-text-stroke:0.7px #111;">MagicSlides</div>
<div class="r" style="left:412px;top:233px;width:503px;height:336px;background:linear-gradient(180deg,#7E7E7E,#B9B9B9 40%,#C8C8C8 60%,#9A9A9A 100%)"></div>
<div class="r" style="left:480px;top:400px;width:200px;height:100px;border-radius:40%;background:#555;opacity:0.8"></div>
<div class="r" style="left:592px;top:264px;width:175px;height:152px;background:#A3842F;opacity:0.92"></div>
</div></div>
<div class="t" style="left:15.80px;top:217.00px;font-size:18px;color:#B7472A;transform:scaleX(0.6992);">1</div>
<div class="t" style="left:15.30px;top:354.00px;font-size:18px;color:#444;transform:scaleX(0.8990);">2</div>
<div class="t" style="left:15.30px;top:491.00px;font-size:18px;color:#444;transform:scaleX(0.8990);">3</div>
<div class="t" style="left:15.30px;top:628.00px;font-size:18px;color:#444;transform:scaleX(0.8990);">4</div>
<div class="t" style="left:15.30px;top:765.00px;font-size:18px;color:#444;transform:scaleX(0.8990);">5</div>
<svg class="r" style="left:12px;top:238px;" width="14" height="13" viewBox="0 0 14 13"><polygon points="7.50,0.80 9.03,4.89 13.40,5.08 9.98,7.80 11.14,12.02 7.50,9.60 3.86,12.02 5.02,7.80 1.60,5.08 5.97,4.89" fill="#5F5F5F"/><rect x="0.5" y="3.5" width="2" height="1.2" fill="#5F5F5F"/><rect x="0.5" y="7.5" width="2" height="1.2" fill="#5F5F5F"/></svg>
<svg class="r" style="left:12px;top:376px;" width="14" height="13" viewBox="0 0 14 13"><polygon points="7.50,0.80 9.03,4.89 13.40,5.08 9.98,7.80 11.14,12.02 7.50,9.60 3.86,12.02 5.02,7.80 1.60,5.08 5.97,4.89" fill="#5F5F5F"/><rect x="0.5" y="3.5" width="2" height="1.2" fill="#5F5F5F"/><rect x="0.5" y="7.5" width="2" height="1.2" fill="#5F5F5F"/></svg>
<svg class="r" style="left:0px;top:0px;pointer-events:none" width="1919" height="889" viewBox="0 0 1919 889"><rect x="585.5" y="333.5" width="1021" height="239" fill="none" stroke="#555" stroke-width="1" stroke-dasharray="2,2"/><line x1="1095.7" y1="303" x2="1095.7" y2="327" stroke="#5F5F5F" stroke-width="1.3"/><circle cx="586" cy="333.8" r="5.9" fill="#FFFFFF" stroke="#5F5F5F" stroke-width="1.7"/><circle cx="1095.7" cy="333.8" r="5.9" fill="#FFFFFF" stroke="#5F5F5F" stroke-width="1.7"/><circle cx="1607" cy="333.8" r="5.9" fill="#FFFFFF" stroke="#5F5F5F" stroke-width="1.7"/><circle cx="586" cy="453.2" r="5.9" fill="#FFFFFF" stroke="#5F5F5F" stroke-width="1.7"/><circle cx="1607" cy="453.2" r="5.9" fill="#FFFFFF" stroke="#5F5F5F" stroke-width="1.7"/><circle cx="586" cy="572.6" r="5.9" fill="#FFFFFF" stroke="#5F5F5F" stroke-width="1.7"/><circle cx="1095.7" cy="572.6" r="5.9" fill="#FFFFFF" stroke="#5F5F5F" stroke-width="1.7"/><circle cx="1607" cy="572.6" r="5.9" fill="#FFFFFF" stroke="#5F5F5F" stroke-width="1.7"/><path d="M1101.15,299.46 A10.2,10.2 0 1 1 1105.42,289.86" fill="none" stroke="#5F5F5F" stroke-width="5.6"/><path d="M1101.15,299.46 A10.2,10.2 0 1 1 1105.42,289.86" fill="none" stroke="#FFFFFF" stroke-width="2.0"/><polygon points="1097,289.8 1115,289.8 1105.9,298.8" fill="#FFFFFF" stroke="#5F5F5F" stroke-width="1.7" stroke-linejoin="miter"/></svg>
<div class="r" style="left:550px;top:334.4px;width:28px;height:19.4px;background:#F6BFA5;box-sizing:border-box;border:1px solid #D9603B;"></div>
<div class="t" style="left:560.66px;top:339.00px;font-size:12px;color:#333;">1</div>
<div class="r" style="left:580px;top:338px;width:1px;height:19px;background:#E0583A;"></div>
<svg class="r" style="left:0px;top:0px;pointer-events:none" width="1919" height="889" viewBox="0 0 1919 889"><g stroke="#E23A3A" stroke-width="6.2" stroke-linecap="round" stroke-linejoin="round" fill="none"><line x1="1416" y1="656.5" x2="609" y2="162"/><polyline points="632,162.5 608,161 620.5,182"/></g></svg>
</body></html>
